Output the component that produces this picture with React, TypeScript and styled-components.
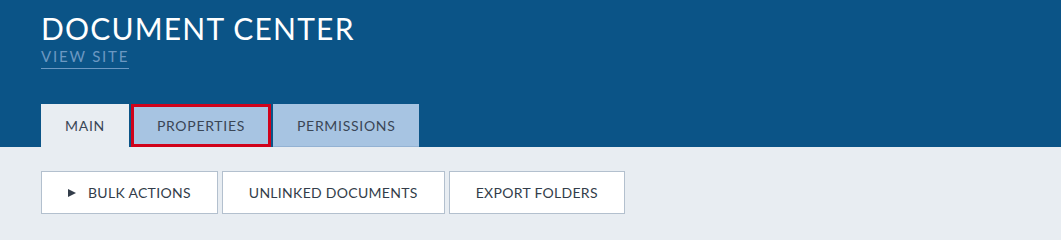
import React from 'react';
import styled, { createGlobalStyle } from 'styled-components';

const GlobalStyle = createGlobalStyle`
  html, body {
    margin: 0;
    padding: 0;
    background: #e8edf2;
    font-family: Lato, "Open Sans", Arial, sans-serif;
  }
`;

const Header = styled.header`
  background: #0b5487;
  padding: 10px 0 0 41px;
`;

const Title = styled.h1`
  margin: 0;
  color: #ffffff;
  font-size: 30px;
  line-height: 36px;
  font-weight: 400;
  letter-spacing: 1.2px;
`;

const ViewSite = styled.a`
  display: inline-block;
  margin-top: 1px;
  padding-bottom: 3px;
  color: #6b98c2;
  font-size: 15px;
  line-height: 18px;
  letter-spacing: 1.8px;
  text-decoration: none;
  border-bottom: 1px solid #6b98c2;
`;

const Tabs = styled.nav`
  display: flex;
  gap: 2px;
  margin-top: 35px;
`;

const Tab = styled.div<{ $active?: boolean; $focused?: boolean }>`
  box-sizing: border-box;
  height: 43px;
  display: flex;
  align-items: center;
  padding: 0 ${(p) => (p.$focused ? 23 : 24)}px;
  background: ${(p) => (p.$active ? '#e8edf2' : '#a7c4e2')};
  border: ${(p) => (p.$focused ? '3px solid #d0021b' : 'none')};
  border-bottom: ${(p) =>
    p.$focused ? '3px solid #d0021b' : p.$active ? 'none' : '1px solid #93b2d3'};
  color: #3a4656;
  font-size: 14px;
  letter-spacing: 0.7px;
  cursor: pointer;
`;

const Content = styled.main`
  padding: 24px 41px 10px;
`;

const Actions = styled.div`
  display: flex;
  gap: 4px;
`;

const ActionButton = styled.button`
  box-sizing: border-box;
  height: 43px;
  display: flex;
  align-items: center;
  gap: 12px;
  padding: 0 26px;
  background: #ffffff;
  border: 1px solid #b3c0ce;
  border-radius: 0;
  color: #333d4a;
  font-family: inherit;
  font-size: 14px;
  letter-spacing: 0.3px;
  cursor: pointer;
`;

const Arrow = styled.span`
  width: 0;
  height: 0;
  border-top: 4px solid transparent;
  border-bottom: 4px solid transparent;
  border-left: 8px solid #333d4a;
`;

const App: React.FC = () => {
  return (
    <>
      <GlobalStyle />
      <Header>
        <Title>DOCUMENT CENTER</Title>
        <ViewSite href="#">VIEW SITE</ViewSite>
        <Tabs>
          <Tab $active>MAIN</Tab>
          <Tab $focused>PROPERTIES</Tab>
          <Tab>PERMISSIONS</Tab>
        </Tabs>
      </Header>
      <Content>
        <Actions>
          <ActionButton>
            <Arrow />
            BULK ACTIONS
          </ActionButton>
          <ActionButton>UNLINKED DOCUMENTS</ActionButton>
          <ActionButton>EXPORT FOLDERS</ActionButton>
        </Actions>
      </Content>
    </>
  );
};

export default App;
